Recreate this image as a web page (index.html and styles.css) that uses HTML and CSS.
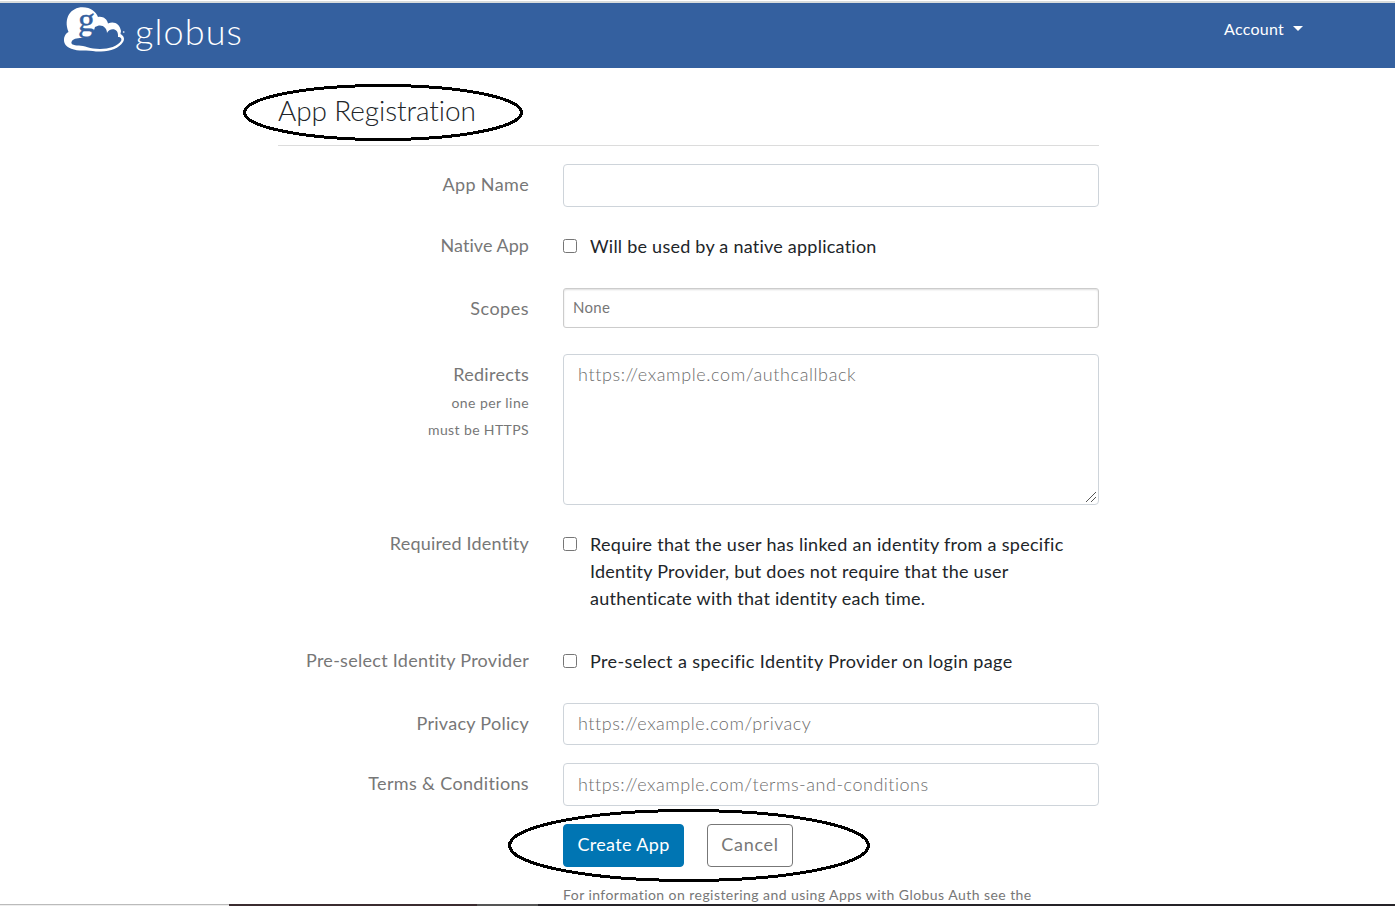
FILE: index.html
```
<!DOCTYPE html>
<html lang="en">
<head>
<meta charset="utf-8">
<title>App Registration</title>
<link rel="stylesheet" href="styles.css">
</head>
<body>
<div class="page">
  <header class="navbar">
    <div class="brand">
      <svg class="brand-cloud" width="64" height="48" viewBox="0 0 64 48">
        <path fill="#fff" d="M6.500 27C1 13 9 2.300 20.500 2.300C29 2.300 34 7 36 12C41 11 45 14 46 18.500C52 15.500 58 19 59 26C59 27 58.500 28 58.500 29C62 31 63 34 61 37C57 43 49 46.500 39 46.500C34 47 30 45.500 24 45.500C14 46 5 44 2.500 38C1 33 3 29 6.500 27Z"/>
        <path fill="#34609f" d="M10 36C12 32.500 20 33 25 33C29 32 31 29 33 22C39 18 45 22 45 28C47 23 57 22 56 32C59 32 60 34 59 36C56 41 47 44 38 44C28 44 22 40.500 17 40.500C11 40.500 8 39 10 36Z"/>
        <text class="brand-g" x="16" y="26">g</text>
        <circle cx="61.700" cy="27" r=".9" fill="#c5d2e5"/>
      </svg>
      <span class="brand-name">globus</span>
    </div>
    <div class="account"><span>Account</span><i class="caret"></i></div>
  </header>
  <main class="content">
    <h1 class="title">App Registration</h1>
    <form class="form">
      <div class="row"><div class="label"><span class="l1">App Name</span></div><input class="input" type="text"></div>
      <div class="row row-check"><div class="label"><span class="l2">Native App</span></div><label class="check"><input type="checkbox"><span class="c1">Will be used by a native application</span></label></div>
      <div class="row row-scopes"><div class="label"><span class="l3">Scopes</span></div><div class="select"><span>None</span></div></div>
      <div class="row"><div class="label"><span class="l4">Redirects</span><small class="s1">one per line</small><small class="s2">must be HTTPS</small></div><div class="area-wrap"><textarea class="input area p1" placeholder="https://example.com/authcallback"></textarea><svg class="grip" width="12" height="12" viewBox="0 0 12 12"><path d="M1 11L11 1M6 11L11 6"/></svg></div></div>
      <div class="row row-identity"><div class="label"><span class="l5">Required Identity</span></div><label class="check"><input type="checkbox"><span><span class="c2">Require that the user has linked an identity from a specific</span><br><span class="c3">Identity Provider, but does not require that the user</span><br><span class="c4">authenticate with that identity each time.</span></span></label></div>
      <div class="row row-check"><div class="label"><span class="l6">Pre-select Identity Provider</span></div><label class="check"><input type="checkbox"><span class="c5">Pre-select a specific Identity Provider on login page</span></label></div>
      <div class="row row-privacy"><div class="label"><span class="l7">Privacy Policy</span></div><input class="input p2" type="text" placeholder="https://example.com/privacy"></div>
      <div class="row"><div class="label"><span class="l8">Terms &amp; Conditions</span></div><input class="input p3" type="text" placeholder="https://example.com/terms-and-conditions"></div>
      <div class="actions"><button type="button" class="btn primary">Create App</button><button type="button" class="btn secondary">Cancel</button></div>
      <p class="info">For information on registering and using Apps with Globus Auth see the</p>
    </form>
  </main>
  <svg class="marks" width="1395" height="906" shape-rendering="crispEdges">
    <ellipse cx="383" cy="112.500" rx="138.500" ry="27"/>
    <ellipse cx="689" cy="845.500" rx="179.500" ry="35"/>
  </svg>
  <div class="taskbar"><i class="tb-light"></i><i class="tb-dark"></i><i class="tb-mid"></i><i class="tb-rest"></i></div>
</div>
</body>
</html>
```
FILE: styles.css
```
* { box-sizing: border-box; }
body { margin: 0; background: #fff; font-family: Lato, sans-serif; font-size: 18px; line-height: 27px; color: #212529; overflow: hidden; font-variant-ligatures: none; }
.page { width: 1395px; height: 906px; padding-top: 1px; position: relative; overflow: hidden; }
.navbar { height: 67px; border-top: 2px solid #d9dcdc; background: #34609f; background-clip: padding-box; display: flex; justify-content: space-between; padding: 0 92px 0 62px; color: #fff; }
.brand { display: flex; gap: 9px; padding-top: 2px; }
.brand-cloud { display: block; overflow: visible; }
.brand-g { font: 34px "Liberation Serif", serif; fill: #34609f; stroke: #34609f; stroke-width: .4px; }
.brand-name { font-size: 36px; font-weight: 300; line-height: 53px; letter-spacing: 1.1px; }
.account { display: flex; align-items: center; height: 51px; font-size: 16px; letter-spacing: .25px; gap: 9px; }
.caret { border: 5px solid transparent; border-top-color: #fff; border-bottom: 0; margin-bottom: 1px; }
.content { width: 821px; margin-left: 278px; }
.title { margin: 0 0 18px; height: 78px; padding-top: 23px; border-bottom: 1px solid #dcdcdc; font-size: 28px; font-weight: 300; line-height: 38px; letter-spacing: -.1px; }
.row { display: grid; grid-template-columns: 251px 536px; gap: 34px; margin-bottom: 18px; align-items: start; }
.row-check { height: 45px; }
.row-scopes { height: 48px; }
.row-identity { height: 99px; }
.row-privacy { height: 42px; }
.label { padding-top: 7px; text-align: right; color: #777; }
.label span, .label small { display: block; white-space: nowrap; }
.label small { font-size: 14px; position: relative; top: 1px; }
.input { display: block; width: 536px; height: 43px; margin: 0; border: 1px solid #ced4da; border-radius: 4px; padding: 6px 14px 8px; font: 300 18px/27px Lato, sans-serif; font-variant-ligatures: none; background: #fff; outline: 0; }
.input::placeholder { color: #6c6c6c; opacity: 1; }
.row-privacy .input { height: 42px; }
.area-wrap { position: relative; }
.area { height: 151px; resize: none; }
.grip { position: absolute; right: 2px; bottom: 2px; fill: none; stroke: #555; stroke-width: 1px; }
.check { display: flex; gap: 13px; padding-top: 8px; white-space: nowrap; }
.check input { margin: 6px 0 0; width: 14px; height: 14px; flex: none; }
.select { height: 40px; border: 1px solid #ccc; border-radius: 3px; box-shadow: inset 0 1px 2px #ddd; padding: 5px 9px; font-size: 15px; letter-spacing: .3px; color: #777; }
.actions { display: flex; gap: 23px; margin-left: 285px; }
.btn { height: 43px; padding: 0 0 2px; border-radius: 4px; font: 400 18px/27px Lato, sans-serif; white-space: nowrap; }
.primary { width: 121px; border: 1px solid #0075b3; background: #0075b3; color: #fff; letter-spacing: .35px; }
.secondary { width: 86px; border: 1px solid #777; background: #fff; color: #777; letter-spacing: .7px; }
.info { margin: 14px 0 0 285px; font-size: 14px; color: #777; white-space: nowrap; letter-spacing: .445px; }
.l1, .l8 { letter-spacing: .35px; }
.l2 { letter-spacing: .05px; }
.l3 { letter-spacing: .5px; }
.l4 { letter-spacing: .3px; }
.l5 { letter-spacing: .2px; }
.l6, .l7 { letter-spacing: .28px; }
.s1 { letter-spacing: .45px; }
.s2 { letter-spacing: .38px; }
.c1 { letter-spacing: .24px; }
.c2 { letter-spacing: .29px; }
.c3 { letter-spacing: .25px; }
.c4 { letter-spacing: .25px; }
.c5 { letter-spacing: .38px; }
.p1 { letter-spacing: .6px; }
.p2 { letter-spacing: .53px; }
.p3 { letter-spacing: .52px; }
.marks { position: absolute; left: 0; top: 0; pointer-events: none; }
.marks ellipse { fill: none; stroke: #000; stroke-width: 3px; }
.taskbar { position: absolute; left: 0; bottom: 0; width: 100%; height: 2px; display: flex; }
.tb-light { width: 229px; border-top: 1px solid #bbb; background: #eee; }
.tb-dark { width: 248px; background: #3b2c30; }
.tb-mid { width: 61px; background: #555; }
.tb-rest { flex: 1; background: #252328; }
```
